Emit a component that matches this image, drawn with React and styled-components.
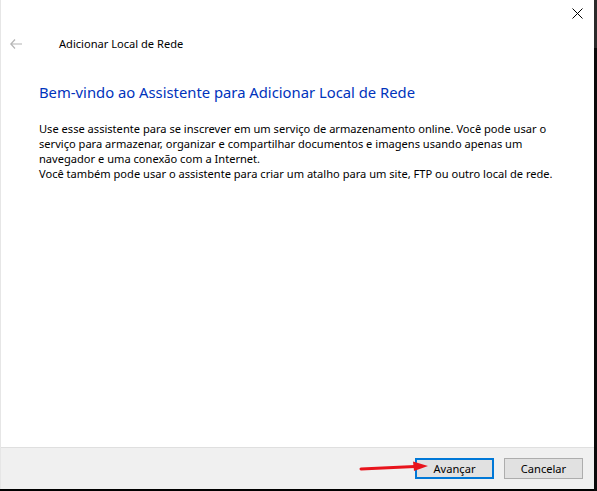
import React from "react";
import styled, { createGlobalStyle } from "styled-components";

const Global = createGlobalStyle`
  html, body { margin: 0; padding: 0; background: #000; }
  body { font-family: "Noto Sans", "Open Sans", sans-serif; }
`;

const Screen = styled.div`
  width: 597px;
  height: 491px;
  display: flex;
  background: #000;
  overflow: hidden;
`;

const Window = styled.div`
  width: 594px;
  height: 489px;
  display: flex;
  flex-direction: column;
  background: #fff;
  border-left: 1px solid #e6e6e6;
  box-sizing: border-box;
`;

const RightEdge = styled.div`
  width: 3px;
  height: 491px;
  background: linear-gradient(#2b2b2b 0 48px, #0a0a0a 48px);
`;

const TitleBar = styled.div`
  height: 30px;
  display: flex;
  justify-content: flex-end;
`;

const CloseBtn = styled.div`
  width: 30px;
  height: 26px;
  display: flex;
  align-items: center;
  justify-content: center;
  margin-right: 2px;
`;

const NavRow = styled.div`
  height: 27px;
  display: flex;
  align-items: center;
  padding-left: 9px;
`;

const Back = styled.div`
  width: 14px;
  display: flex;
  align-items: center;
  margin-top: 1px;
`;

const NavTitle = styled.div`
  margin-left: 35px;
  font-size: 11.1px;
  color: #000;
  white-space: nowrap;
`;

const Body = styled.div`
  flex: 1;
  padding: 25px 10px 0 38px;
`;

const Heading = styled.div`
  font-size: 14.8px;
  color: #0033bc;
  line-height: 20px;
  white-space: nowrap;
`;

const Text = styled.p`
  margin: 19px 0 0;
  font-size: 11.1px;
  line-height: 15px;
  color: #000;
  white-space: nowrap;
`;

const Footer = styled.div`
  height: 41px;
  background: #f0f0f0;
  border-top: 1px solid #dfdfdf;
  display: flex;
  justify-content: flex-end;
  align-items: center;
  gap: 10px;
  padding-right: 11px;
  position: relative;
`;

const Button = styled.div`
  width: 79px;
  height: 21px;
  box-sizing: border-box;
  display: flex;
  align-items: center;
  justify-content: center;
  font-size: 11.1px;
  background: #e1e1e1;
  border: ${(p) => (p.$primary ? "2px solid #0078d7" : "1px solid #adadad")};
  color: #000;
`;

const Arrow = styled.svg`
  position: absolute;
  left: 358px;
  top: 12px;
`;

export default function App() {
  return (
    <>
      <Global />
      <Screen>
        <Window>
          <TitleBar>
            <CloseBtn>
              <svg width="11" height="11" viewBox="0 0 11 11">
                <path d="M0.5 0.5 L10.5 10.5 M10.5 0.5 L0.5 10.5" stroke="#000" strokeWidth="1" />
              </svg>
            </CloseBtn>
          </TitleBar>
          <NavRow>
            <Back>
              <svg width="12" height="10" viewBox="0 0 12 10">
                <path d="M5 0.5 L0.8 5 L5 9.5 M0.8 5 H12" stroke="#b4b4b4" strokeWidth="1.2" fill="none" />
              </svg>
            </Back>
            <NavTitle>Adicionar Local de Rede</NavTitle>
          </NavRow>
          <Body>
            <Heading>Bem-vindo ao Assistente para Adicionar Local de Rede</Heading>
            <Text>
              Use esse assistente para se inscrever em um serviço de armazenamento online. Você pode usar o
              <br />
              serviço para armazenar, organizar e compartilhar documentos e imagens usando apenas um
              <br />
              navegador e uma conexão com a Internet.
              <br />
              Você também pode usar o assistente para criar um atalho para um site, FTP ou outro local de rede.
            </Text>
          </Body>
          <Footer>
            <Button $primary>Avançar</Button>
            <Button>Cancelar</Button>
            <Arrow width="74" height="12" viewBox="0 0 74 12">
              <path d="M2 9 L56 6.5" stroke="#e8141c" strokeWidth="3" strokeLinecap="round" />
              <path d="M54 1.5 L69 6 L55 11 Z" fill="#e8141c" />
            </Arrow>
          </Footer>
        </Window>
        <RightEdge />
      </Screen>
    </>
  );
}
